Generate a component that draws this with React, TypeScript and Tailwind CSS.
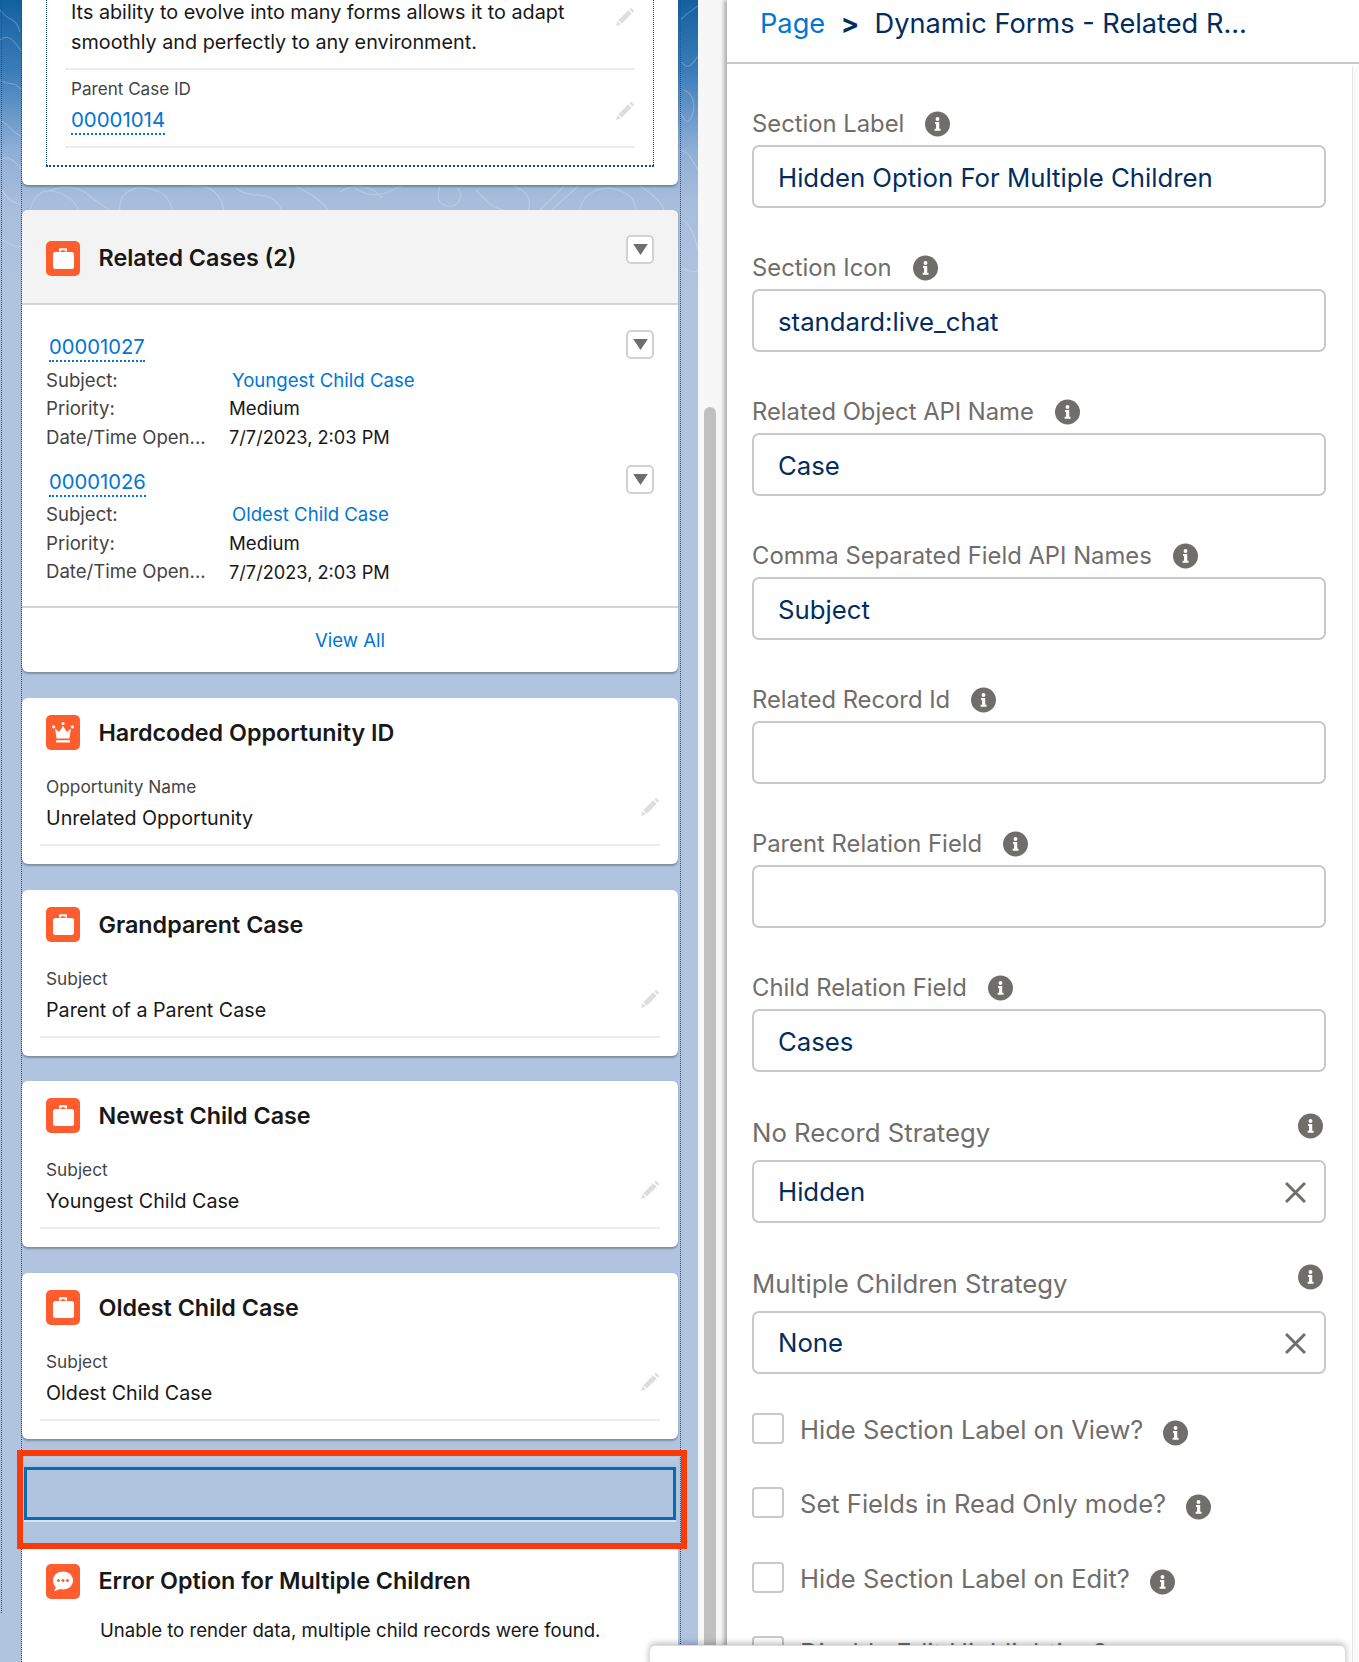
import React from "react";

const font = "[font-family:Inter,'Noto_Sans',sans-serif]";

function CaseIcon() {
  return (
    <svg viewBox="0 0 34 35" className="w-[34px] h-[35px] shrink-0">
      <rect width="34" height="35" rx="5" fill="#ff5d2d" />
      <path d="M13 10.5V8.2a1 1 0 0 1 1-1h6a1 1 0 0 1 1 1v2.3h-2.2V9.2h-3.6v1.3z" fill="#fff" />
      <rect x="7" y="11" width="21" height="17" rx="2.5" fill="#fff" />
    </svg>
  );
}
function CrownIcon() {
  return (
    <svg viewBox="0 0 34 35" className="w-[34px] h-[35px] shrink-0">
      <rect width="34" height="35" rx="5" fill="#ff5d2d" />
      <path d="M9 13.5l4 3.5 4-6 4 6 4-3.5-1.6 10H10.6z" fill="#fff" />
      <circle cx="7.6" cy="11.8" r="1.6" fill="#fff" />
      <circle cx="17" cy="8.5" r="1.6" fill="#fff" />
      <circle cx="26.4" cy="11.8" r="1.6" fill="#fff" />
      <rect x="10" y="25.2" width="14" height="2.4" rx="0.6" fill="#fff" />
    </svg>
  );
}
function ChatIcon() {
  return (
    <svg viewBox="0 0 34 35" className="w-[34px] h-[35px] shrink-0">
      <rect width="34" height="35" rx="5" fill="#ff5d2d" />
      <path d="M17 7.5c5.8 0 10 3.9 10 9s-4.2 9-10 9c-1.2 0-2.3-.2-3.4-.5-1.6 1.2-3.5 1.8-5.6 1.8 1-1.1 1.6-2.5 1.7-3.8C8 21.3 7 19 7 16.5c0-5.1 4.2-9 10-9z" fill="#fff" />
      <circle cx="12.5" cy="16.5" r="1.5" fill="#ff5d2d" />
      <circle cx="17" cy="16.5" r="1.5" fill="#ff5d2d" />
      <circle cx="21.5" cy="16.5" r="1.5" fill="#ff5d2d" />
    </svg>
  );
}
function Pencil() {
  return (
    <svg viewBox="0 0 19 19" className="w-[20px] h-[20px] shrink-0" fill="#dedede">
      <path d="M15.2.6l3.2 3.2-1.6 1.6-3.2-3.2z" />
      <path d="M12.5 3.2l3.3 3.3-9.4 9.4-3.3-3.3z" />
      <path d="M2.3 13.4l3.3 3.3-4.6 1.3z" />
    </svg>
  );
}
function Info() {
  return (
    <svg viewBox="0 0 26 26" className="w-[25px] h-[26px] shrink-0">
      <circle cx="13" cy="13" r="13" fill="#706e6b" />
      <circle cx="13" cy="7.8" r="2" fill="#fff" />
      <path d="M10.5 11h4.3v7h1.400v2h-6.200v-2h1.500v-5h-1z" fill="#fff" />
    </svg>
  );
}
function Drop() {
  return (
    <div className="w-[28px] h-[29px] shrink-0 flex items-center justify-center bg-white rounded-[5px] border-2 border-[#d2d2d2]">
      <svg viewBox="0 0 16 12" className="w-[15px] h-[11px]">
        <path d="M0 0h16L8 12z" fill="#706e6b" />
      </svg>
    </div>
  );
}
function Close() {
  return (
    <svg viewBox="0 0 20 20" className="w-[21px] h-[21px]" stroke="#706e6b" strokeWidth="2.8" fill="none">
      <path d="M1 1l18 18M19 1L1 19" />
    </svg>
  );
}

function Related({ id, subject, first }: { id: string; subject: string; first?: boolean }) {
  return (
    <div className={first ? "mb-[12.5px]" : ""}>
      <div className="flex justify-between items-start h-[34px]">
        <span className="ml-[3px] mt-[3px] h-[29px] leading-[27px] text-[20.2px] text-[#0176d3] border-b-2 border-dotted border-[#0176d3]">{id}</span>
        <Drop />
      </div>
      <div className="mt-[2.5px] grid grid-cols-[183px_1fr] auto-rows-[28.5px] items-center text-[18.6px] text-[#181818]">
        <span className="text-[#444444]">Subject:</span>
        <span className="ml-[3px] text-[#0176d3]">{subject}</span>
        <span className="text-[#444444]">Priority:</span>
        <span>Medium</span>
        <span className="text-[#444444] truncate">Date/Time Open...</span>
        <span className="text-[18.2px]">7/7/2023, 2:03 PM</span>
      </div>
    </div>
  );
}

function FieldCard({ title, label, value, icon }: { title: string; label: string; value: string; icon: React.ReactNode }) {
  return (
    <section className="h-[166px] bg-white rounded-[6px] shadow-[0_2px_2px_rgba(0,0,0,0.28)]">
      <header className="flex items-center gap-[18.5px] pl-[24px] pt-[17px] h-[52px]">
        {icon}
        <h2 className="mt-[2px] text-[23.3px] font-semibold text-[#181818]">{title}</h2>
      </header>
      <div className="mx-[18px] mt-[26px] h-[70px] border-b-2 border-[#ececec] pl-[6px] flex justify-between">
        <div>
          <div className="h-[22px] leading-[22px] text-[17.3px] text-[#444444]">{label}</div>
          <div className="mt-[5px] h-[30px] leading-[30px] text-[19.7px] text-[#181818]">{value}</div>
        </div>
        <div className="mt-[21px]"><Pencil /></div>
      </div>
    </section>
  );
}

function TextField({ label, value }: { label: string; value?: string }) {
  return (
    <div className="h-[144px]">
      <div className="h-[44px] flex items-center gap-[21px] pt-[1px]">
        <span className="text-[23.8px] text-[#706e6b]">{label}</span>
        <Info />
      </div>
      <div className="h-[63px] rounded-[7px] border-2 border-[#c9c9c9] flex items-center pl-[24px] pt-[3px] text-[25.75px] text-[#032d60]">{value}</div>
    </div>
  );
}
function Combo({ label, value }: { label: string; value: string }) {
  return (
    <div className="h-[151px]">
      <div className="h-[51px] flex justify-between pr-[2px]">
        <span className="h-[48px] flex items-center text-[25.75px] text-[#706e6b]">{label}</span>
        <div className="mt-[4px] mr-[1px]"><Info /></div>
      </div>
      <div className="h-[63px] rounded-[7px] border-2 border-[#c9c9c9] flex items-center justify-between pl-[24px] pr-[18px] pt-[2px] text-[25.75px] text-[#032d60]">
        {value}
        <Close />
      </div>
    </div>
  );
}
function Check({ label, noInfo }: { label: string; noInfo?: boolean }) {
  return (
    <div className="h-[74.33px] flex items-start">
      <div className="w-[32px] h-[31px] shrink-0 rounded-[4px] border-2 border-[#c9c9c9]" />
      <span className="ml-[16px] h-[34px] flex items-center text-[25.55px] text-[#706e6b]">{label}</span>
      {!noInfo && <div className="ml-[20px] mt-[7px]"><Info /></div>}
    </div>
  );
}

function Topo() {
  return (
    <svg className="absolute left-0 top-0 w-[698px] h-[300px]" viewBox="0 0 698 300" fill="none" stroke="#ffffff" strokeOpacity="0.22" strokeWidth="1.2">
      <path d="M0 10c8 12 16 6 20 22M0 40c10-8 16 4 22 12M0 80c8 6 14 0 22 10M0 120c10 4 12 14 22 16M0 160c8-6 16 2 22 10M2 190c6 10 12 14 20 14M0 240c8 0 14 10 22 6" />
      <path d="M680 20c8-8 12-10 18-14M682 62c6 10 12 0 16-6M684 90c10 4 12 16 8 26s-8 4-12-4M680 150c10 2 14 14 18 20M684 220c8 8 12 20 14 30M680 270c6-4 12 6 18 0" />
      <path d="M30 210c4-14 12-22 26-18s20 12 22 18M46 192c20-8 32-6 44 4s14 10 20 14M120 210c-2-14 10-24 26-22s24 10 26 22M190 186c18-2 30 6 34 24M236 188c10 10 30 4 38 12s6 8 8 10M296 186c14 8 26 14 32 24M340 192c14-10 34-6 42 6M352 186c10 8 20 10 30 8s12-6 20-8M440 186c-4 12-2 18 8 20s16-10 10-18M476 190c14 16 18 18 28 20M514 186c14 6 18 14 14 24M540 210l24-24M552 210l26-24M580 210c2-16 20-26 38-20s16 14 18 20M640 186c12 8 20 14 24 24" />
    </svg>
  );
}

export default function App() {
  return (
    <div className={`relative flex h-[1662px] w-[1359px] overflow-hidden bg-white ${font}`}>
      {/* canvas */}
      <div className="relative w-[698px] h-full shrink-0 overflow-hidden bg-[linear-gradient(180deg,#14609f_0px,#3a7cb8_70px,#8eaed6_150px,#a6bddb_200px,#b0c4df_290px)]">
        <Topo />
        <div className="absolute left-[1px] top-0 h-[1613px] border-l border-dotted border-[#24508a]" />
        <div className="relative ml-[21px] w-[660px] h-full border-x border-dotted border-[#24508a] pr-[2px]">
          {/* first card */}
          <section className="h-[185px] bg-white rounded-b-[6px] shadow-[0_2px_2px_rgba(0,0,0,0.28)]">
            <div className="ml-[24px] w-[608px] h-[167px] border-x border-b-2 border-dotted border-[#1b4a80] px-[18px]">
              <div className="h-[70px] border-b-2 border-[#ececec] pl-[6px] flex justify-between">
                <p className="-mt-[3px] text-[19.8px] leading-[30px] text-[#181818]">
                  Its ability to evolve into many forms allows it to adapt<br />smoothly and perfectly to any environment.
                </p>
                <div className="mt-[7px]"><Pencil /></div>
              </div>
              <div className="h-[78px] border-b-2 border-[#ececec] pl-[6px] flex justify-between">
                <div>
                  <div className="mt-[8px] h-[22px] leading-[22px] text-[17.1px] text-[#444444]">Parent Case ID</div>
                  <span className="inline-block mt-[6px] h-[29px] leading-[27px] text-[20.4px] text-[#0176d3] border-b-2 border-dotted border-[#0176d3]">00001014</span>
                </div>
                <div className="mt-[31px]"><Pencil /></div>
              </div>
            </div>
          </section>

          {/* related cases */}
          <section className="mt-[25px] h-[462px] bg-white rounded-[6px] shadow-[0_2px_2px_rgba(0,0,0,0.28)]">
            <header className="h-[95px] bg-[#f3f3f3] rounded-t-[6px] border-b-2 border-[#d4d4d4] px-[24px] flex justify-between">
              <div className="flex items-center gap-[18.5px] h-[96px]">
                <CaseIcon />
                <h2 className="text-[23.3px] font-semibold text-[#181818]">Related Cases (2)</h2>
              </div>
              <div className="mt-[25px]"><Drop /></div>
            </header>
            <div className="h-[303px] border-b-2 border-[#d4d4d4] pt-[25px] px-[24px]">
              <Related first id="00001027" subject="Youngest Child Case" />
              <Related id="00001026" subject="Oldest Child Case" />
            </div>
            <div className="h-[64px] flex items-center justify-center text-[18.6px] text-[#0176d3] pt-[1px]">View All</div>
          </section>

          {/* field cards */}
          <div className="mt-[26px] flex flex-col gap-[25.67px]">
            <FieldCard icon={<CrownIcon />} title="Hardcoded Opportunity ID" label="Opportunity Name" value="Unrelated Opportunity" />
            <FieldCard icon={<CaseIcon />} title="Grandparent Case" label="Subject" value="Parent of a Parent Case" />
            <FieldCard icon={<CaseIcon />} title="Newest Child Case" label="Subject" value="Youngest Child Case" />
            <FieldCard icon={<CaseIcon />} title="Oldest Child Case" label="Subject" value="Oldest Child Case" />
          </div>

          {/* selected empty section */}
          <div className="mt-[18px] h-[88px] pt-[10px] bg-[linear-gradient(180deg,#bccde4_0px,#b0c4df_10px)]">
            <div className="ml-[2px] w-[652px] h-[53px] border-[3px] border-[#0a6bb5] shadow-[0_2px_0_#dbe4f1]" />
          </div>

          {/* error card */}
          <section className="h-[200px] bg-white rounded-t-[6px]">
            <header className="flex items-center gap-[18.5px] pl-[24px] pt-[19px] h-[54px]">
              <ChatIcon />
              <h2 className="text-[23.3px] font-semibold text-[#181818]">Error Option for Multiple Children</h2>
            </header>
            <p className="ml-[78px] mt-[17px] text-[18.6px] leading-[28px] text-[#181818]">Unable to render data, multiple child records were found.</p>
          </section>
        </div>
      </div>

      {/* outer scrollbar */}
      <div className="w-[29px] h-full shrink-0 bg-[#f7f7f7] pl-[6px] pt-[407px]">
        <div className="w-[12px] h-full bg-[#c0c0c0] rounded-t-[6px]" />
      </div>

      {/* property panel */}
      <aside className="relative flex-1 h-full bg-white shadow-[-3px_0_4px_rgba(0,0,0,0.3)] overflow-hidden">
        <div className="h-[64px] border-b-2 border-[#c9c9c9] pl-[33px] pb-[14px] flex items-center text-[27.2px] text-[#032d60]">
          <span className="text-[#0176d3]">Page</span>
          <span className="mx-[15.5px] font-bold">&gt;</span>
          <span>Dynamic Forms - Related R...</span>
        </div>
        <div className="relative h-[1598px] pl-[25px] pt-[37px] w-[599px]">
          <TextField label="Section Label" value="Hidden Option For Multiple Children" />
          <TextField label="Section Icon" value="standard:live_chat" />
          <TextField label="Related Object API Name" value="Case" />
          <TextField label="Comma Separated Field API Names" value="Subject" />
          <TextField label="Related Record Id" />
          <TextField label="Parent Relation Field" />
          <TextField label="Child Relation Field" value="Cases" />
          <Combo label="No Record Strategy" value="Hidden" />
          <Combo label="Multiple Children Strategy" value="None" />
          <div className="pt-[2px]">
            <Check label="Hide Section Label on View?" />
            <Check label="Set Fields in Read Only mode?" />
            <Check label="Hide Section Label on Edit?" />
            <Check label="Disable Edit Highlighting?" noInfo />
          </div>
        </div>
        <div className="absolute right-0 top-[66px] bottom-0 w-[7px] bg-[#fafafa] border-l border-[#e6e6e6]" />
      </aside>

      {/* overlays */}
      <div className="absolute left-[17px] top-[1450px] w-[670px] h-[99px] border-[6px] border-[#fb3a0a]" />
      <div className="absolute left-[649px] top-[1645px] w-[697px] h-[30px] bg-white rounded-t-[6px] border border-[#dddddd] shadow-[0_-2px_6px_rgba(0,0,0,0.25)]" />
    </div>
  );
}
